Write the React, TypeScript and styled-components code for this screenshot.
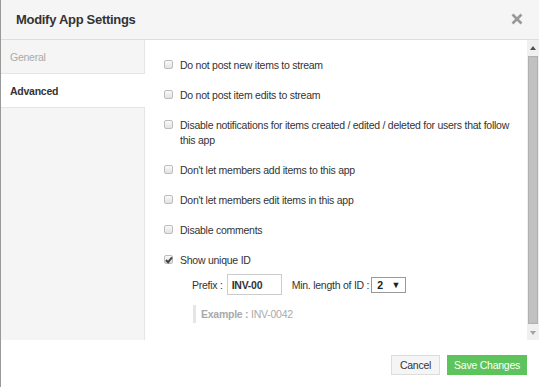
import { useState } from 'react';
import styled, { createGlobalStyle } from 'styled-components';

const GlobalStyle = createGlobalStyle`
  html, body {
    margin: 0;
    padding: 0;
    background: #fff;
  }
  body {
    font-family: "Liberation Sans", Arial, sans-serif;
    font-size: 10.5px;
    letter-spacing: -0.25px;
    color: #333;
  }
`;

const Page = styled.div`
  width: 539px;
  height: 387px;
  display: flex;
  box-sizing: border-box;
  border-left: 1px solid #999;
  overflow: hidden;
`;

const Modal = styled.div`
  flex: 1;
  display: flex;
  flex-direction: column;
  background: #fff;
`;

const Header = styled.div`
  height: 38px;
  flex-shrink: 0;
  display: flex;
  align-items: center;
  justify-content: space-between;
  padding: 0 15px 1px 15px;
  background: #f5f5f5;
  border-bottom: 1px solid #ddd;
`;

const Title = styled.h3`
  margin: 0;
  font-size: 13px;
  letter-spacing: -0.3px;
  font-weight: bold;
  color: #333;
`;

const CloseButton = styled.button`
  border: 0;
  background: none;
  padding: 0;
  width: 14px;
  height: 14px;
  display: flex;
  align-items: center;
  justify-content: center;
  cursor: pointer;
`;

const Body = styled.div`
  height: 300px;
  display: flex;
`;

const Sidebar = styled.div`
  width: 143px;
  flex-shrink: 0;
  background: #f5f5f5;
  border-right: 1px solid #e5e5e5;
`;

const Tab = styled.div<{ $active?: boolean }>`
  height: 33px;
  display: flex;
  align-items: center;
  padding-left: 9px;
  border-bottom: 1px solid #e5e5e5;
  background: ${p => (p.$active ? '#fff' : 'transparent')};
  color: ${p => (p.$active ? '#333' : '#aaa')};
  font-weight: ${p => (p.$active ? 'bold' : 'normal')};
  margin-right: ${p => (p.$active ? '-1px' : '0')};
  cursor: pointer;
`;

const Content = styled.div`
  flex: 1;
  display: flex;
`;

const Settings = styled.div`
  flex: 1;
  padding: 18px 6px 0 19px;
`;

const CheckRow = styled.label`
  display: flex;
  align-items: flex-start;
  line-height: 15px;
  margin-bottom: 15px;
`;

const Check = styled.input`
  appearance: none;
  flex-shrink: 0;
  width: 9px;
  height: 9px;
  margin: 2px 7px 0 0;
  border: 1px solid #bdbdbd;
  border-radius: 2px;
  background: linear-gradient(#fafafa, #e2e2e2);
  position: relative;
  &:checked::after {
    content: '';
    position: absolute;
    left: 2px;
    top: 0px;
    width: 2px;
    height: 5px;
    border: solid #444;
    border-width: 0 2px 2px 0;
    transform: rotate(40deg);
  }
`;

const IdOptions = styled.div`
  display: flex;
  align-items: center;
  padding-left: 28px;
  margin-top: -9px;
`;

const FieldLabel = styled.span`
  margin-right: 4px;
`;

const PrefixInput = styled.input`
  width: 55px;
  height: 21px;
  box-sizing: border-box;
  border: 1px solid #ccc;
  padding: 0 4px;
  font: bold 10.5px "Liberation Sans", Arial, sans-serif;
  letter-spacing: -0.25px;
  color: #333;
  margin-right: 10px;
`;

const SelectBox = styled.div`
  width: 35px;
  height: 16px;
  box-sizing: border-box;
  border: 1px solid #999;
  display: flex;
  align-items: center;
  justify-content: space-between;
  padding: 0 5px 0 5px;
  font-weight: bold;
  color: #222;
  background: #fff;
  margin-left: 2px;
`;

const Caret = styled.span`
  font-size: 9px;
  color: #222;
`;

const Example = styled.div`
  margin: 10px 0 0 29px;
  padding-left: 5px;
  border-left: 3px solid #e5e5e5;
  line-height: 18px;
  color: #aaa;
  b {
    font-weight: bold;
  }
`;

const Scrollbar = styled.div`
  width: 12px;
  flex-shrink: 0;
  display: flex;
  flex-direction: column;
  background: #f0f0f0;
`;

const ScrollArrow = styled.div<{ $down?: boolean }>`
  height: 15px;
  display: flex;
  align-items: center;
  justify-content: center;
  &::before {
    content: '';
    border-left: 3.5px solid transparent;
    border-right: 3.5px solid transparent;
    ${p => (p.$down ? 'border-top: 4px solid #a3a3a3;' : 'border-bottom: 4px solid #505050;')}
  }
`;

const Thumb = styled.div`
  flex: 1;
  margin: 1px 1px;
  background: #c1c1c1;
  border: 1px solid #b0b0b0;
`;

const Footer = styled.div`
  flex: 1;
  display: flex;
  justify-content: flex-end;
  align-items: flex-start;
  padding: 15px 12px 0 0;
  gap: 7px;
`;

const Button = styled.button<{ $primary?: boolean }>`
  height: 20px;
  box-sizing: border-box;
  padding: 0 ${p => (p.$primary ? '6px' : '8px')};
  font: 10.5px "Liberation Sans", Arial, sans-serif;
  letter-spacing: -0.25px;
  border: 1px solid ${p => (p.$primary ? '#5dc35d' : '#ddd')};
  background: ${p => (p.$primary ? '#5dc35d' : '#f5f5f5')};
  color: ${p => (p.$primary ? '#fff' : '#333')};
  cursor: pointer;
`;

const options = [
  'Do not post new items to stream',
  'Do not post item edits to stream',
  'Disable notifications for items created / edited / deleted for users that follow this app',
  "Don't let members add items to this app",
  "Don't let members edit items in this app",
  'Disable comments',
];

export default function App() {
  const [checked, setChecked] = useState<boolean[]>(options.map(() => false));
  const [showId, setShowId] = useState(true);
  const [prefix, setPrefix] = useState('INV-00');

  return (
    <Page>
      <GlobalStyle />
      <Modal>
        <Header>
          <Title>Modify App Settings</Title>
          <CloseButton aria-label="Close">
            <svg width="12" height="12" viewBox="0 0 12 12">
              <path d="M1.5 1.5 L10.5 10.5 M10.5 1.5 L1.5 10.5" stroke="#999" strokeWidth="2.6" />
            </svg>
          </CloseButton>
        </Header>
        <Body>
          <Sidebar>
            <Tab>General</Tab>
            <Tab $active>Advanced</Tab>
          </Sidebar>
          <Content>
            <Settings>
              {options.map((text, i) => (
                <CheckRow key={text}>
                  <Check
                    type="checkbox"
                    checked={checked[i]}
                    onChange={() => setChecked(c => c.map((v, j) => (j === i ? !v : v)))}
                  />
                  <span>{text}</span>
                </CheckRow>
              ))}
              <CheckRow>
                <Check type="checkbox" checked={showId} onChange={() => setShowId(!showId)} />
                <span>Show unique ID</span>
              </CheckRow>
              <IdOptions>
                <FieldLabel>Prefix :</FieldLabel>
                <PrefixInput value={prefix} onChange={e => setPrefix(e.target.value)} />
                <span>Min. length of ID :</span>
                <SelectBox>
                  <span>2</span>
                  <Caret>▼</Caret>
                </SelectBox>
              </IdOptions>
              <Example>
                <b>Example :</b> INV-0042
              </Example>
            </Settings>
            <Scrollbar>
              <ScrollArrow />
              <Thumb />
              <ScrollArrow $down />
            </Scrollbar>
          </Content>
        </Body>
        <Footer>
          <Button>Cancel</Button>
          <Button $primary>Save Changes</Button>
        </Footer>
      </Modal>
    </Page>
  );
}
